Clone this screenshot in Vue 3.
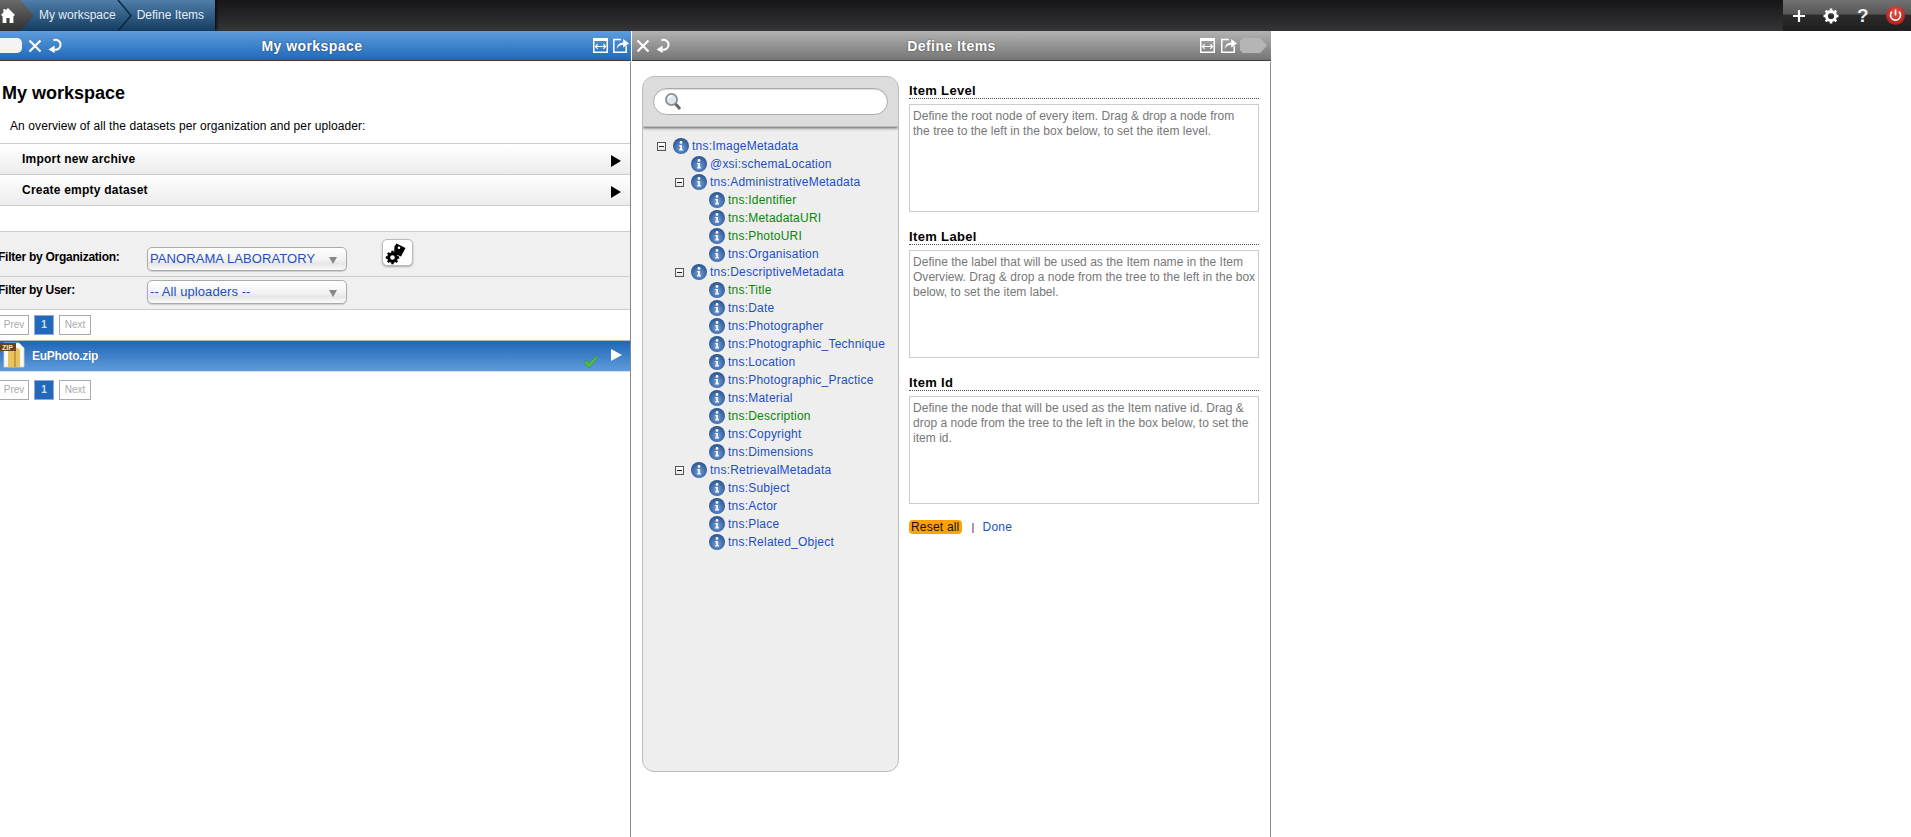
<script setup>
const tree = [
  { t: 'tns:ImageMetadata', l: 0, o: 1 },
  { t: '@xsi:schemaLocation', l: 1 },
  { t: 'tns:AdministrativeMetadata', l: 1, o: 1 },
  { t: 'tns:Identifier', l: 2, g: 1 },
  { t: 'tns:MetadataURI', l: 2, g: 1 },
  { t: 'tns:PhotoURI', l: 2, g: 1 },
  { t: 'tns:Organisation', l: 2 },
  { t: 'tns:DescriptiveMetadata', l: 1, o: 1 },
  { t: 'tns:Title', l: 2, g: 1 },
  { t: 'tns:Date', l: 2 },
  { t: 'tns:Photographer', l: 2 },
  { t: 'tns:Photographic_Technique', l: 2 },
  { t: 'tns:Location', l: 2 },
  { t: 'tns:Photographic_Practice', l: 2 },
  { t: 'tns:Material', l: 2 },
  { t: 'tns:Description', l: 2, g: 1 },
  { t: 'tns:Copyright', l: 2 },
  { t: 'tns:Dimensions', l: 2 },
  { t: 'tns:RetrievalMetadata', l: 1, o: 1 },
  { t: 'tns:Subject', l: 2 },
  { t: 'tns:Actor', l: 2 },
  { t: 'tns:Place', l: 2 },
  { t: 'tns:Related_Object', l: 2 }
]
const sections = [
  { h: 'Item Level', d: 'Define the root node of every item. Drag & drop a node from\nthe tree to the left in the box below, to set the item level.' },
  { h: 'Item Label', d: 'Define the label that will be used as the Item name in the Item\nOverview. Drag & drop a node from the tree to the left in the box\nbelow, to set the item label.' },
  { h: 'Item Id', d: 'Define the node that will be used as the Item native id. Drag &\ndrop a node from the tree to the left in the box below, to set the\nitem id.' }
]
</script>

<template>
  <div class="page">
    <svg class="defs" width="0" height="0" aria-hidden="true">
      <defs>
        <radialGradient id="infoGrad" cx="50%" cy="62%" r="62%">
          <stop offset="0" stop-color="#7aa3d6" />
          <stop offset="0.6" stop-color="#426fae" />
          <stop offset="1" stop-color="#2a548f" />
        </radialGradient>
        <symbol id="close" viewBox="0 0 14 14">
          <path d="M1.5 1.5 L12.5 12.5 M12.5 1.5 L1.5 12.5" stroke="currentColor" stroke-width="2.2" fill="none" />
        </symbol>
        <symbol id="reload" viewBox="0 0 14 16">
          <path d="M5.5 2.2 C9 0.8 12.6 3 12.6 6.8 C12.6 10.2 9.6 12 6.4 11.6" stroke="currentColor" stroke-width="2" fill="none" />
          <path d="M0.5 11.4 L6.6 7.6 L6.6 15 Z" fill="currentColor" />
        </symbol>
        <symbol id="expand" viewBox="0 0 15 15">
          <rect x="0.75" y="0.75" width="13.5" height="13.5" fill="none" stroke="currentColor" stroke-width="1.5" />
          <rect x="0" y="0" width="15" height="3" fill="currentColor" />
          <path d="M2.5 8.5 H12.5 M4.6 6.2 L2.5 8.5 L4.6 10.8 M10.4 6.2 L12.5 8.5 L10.4 10.8" fill="none" stroke="currentColor" stroke-width="1.2" />
        </symbol>
        <symbol id="export" viewBox="0 0 16 15">
          <path d="M8 1.6 H0.8 V14.2 H13.2 V8" fill="none" stroke="currentColor" stroke-width="1.5" />
          <path d="M3.6 11 C4 6.5 7 4.6 10.2 4.4 V1 L16 5.4 L10.2 9.6 V6.8 C7.6 6.8 5.2 8 3.6 11 Z" fill="currentColor" />
        </symbol>
      </defs>
    </svg>

    <header class="topbar">
      <nav class="crumbs">
        <a class="home">
          <svg width="14" height="15" viewBox="0 0 14 15">
            <path d="M7 0 L14 7 L12.4 8.2 L12.4 15 L8.6 15 L8.6 10 L5.4 10 L5.4 15 L1.6 15 L1.6 8.2 L0 7 L2.4 4.6 L2.4 1 L4.4 1 L4.4 2.6 Z" fill="#fff" />
          </svg>
        </a>
        <a class="crumb first">My workspace</a>
        <svg class="sep" width="15" height="31" viewBox="0 0 15 31">
          <path d="M1 0 L14 15.5 L1 31" fill="none" stroke="#10283f" stroke-width="1.5" />
        </svg>
        <a class="crumb">Define Items</a>
      </nav>
      <div class="tools">
        <svg class="tool" width="14" height="14" viewBox="0 0 14 14">
          <path d="M7 1 V13 M1 7 H13" stroke="#fff" stroke-width="2.2" />
        </svg>
        <svg class="tool" width="16" height="16" viewBox="0 0 16 16">
          <circle cx="8" cy="8" r="4.6" fill="none" stroke="#fff" stroke-width="3" />
          <path d="M8 0.5 V3 M8 13 V15.5 M0.5 8 H3 M13 8 H15.5 M2.7 2.7 L4.5 4.5 M11.5 11.5 L13.3 13.3 M13.3 2.7 L11.5 4.5 M4.5 11.5 L2.7 13.3" stroke="#fff" stroke-width="2.6" />
        </svg>
        <span class="help">?</span>
        <svg class="tool" width="19" height="19" viewBox="0 0 19 19">
          <defs>
            <radialGradient id="powerGrad" cx="50%" cy="35%" r="70%">
              <stop offset="0" stop-color="#e8534a" />
              <stop offset="1" stop-color="#a81a14" />
            </radialGradient>
          </defs>
          <circle cx="9.5" cy="9.5" r="9.5" fill="url(#powerGrad)" />
          <path d="M6 5.6 A5 5 0 1 0 13 5.6" fill="none" stroke="#fff" stroke-width="1.6" />
          <path d="M9.5 3.5 V9.5" stroke="#fff" stroke-width="1.6" />
        </svg>
      </div>
    </header>

    <div class="panels">
      <section class="panel left">
        <div class="phead blue">
          <div class="hleft">
            <span class="pill"></span>
            <svg class="ic x"><use href="#close" /></svg>
            <svg class="ic r"><use href="#reload" /></svg>
          </div>
          <div class="ptitle lt">My workspace</div>
          <div class="hright">
            <svg class="ic e"><use href="#expand" /></svg>
            <svg class="ic ex"><use href="#export" /></svg>
          </div>
        </div>
        <div class="pbody lbody">
          <h2 class="wtitle">My workspace</h2>
          <p class="intro">An overview of all the datasets per organization and per uploader:</p>
          <div class="action">Import new archive<i class="tri"></i></div>
          <div class="action">Create empty dataset<i class="tri"></i></div>

          <div class="filters">
            <div class="frow one">
              <label class="flabel">Filter by Organization:</label>
              <div class="sel"><span>PANORAMA LABORATORY</span><i class="caret"></i></div>
              <button class="gearbtn">
                <svg width="22" height="22" viewBox="0 0 22 22">
                  <path d="M11.5 0.5 L20.5 5 L16 13.5 L9 10.5 L9.5 3.5 Z" fill="#000" />
                  <circle cx="14" cy="4.8" r="1.3" fill="#fff" />
                  <circle cx="7.5" cy="14.5" r="3.8" fill="#fff" stroke="#000" stroke-width="3" />
                  <path d="M7.5 7.8 V10 M7.5 19 V21.2 M0.8 14.5 H3 M12 14.5 H14.2 M2.8 9.8 L4.3 11.3 M10.7 17.7 L12.2 19.2 M12.2 9.8 L10.7 11.3 M4.3 17.7 L2.8 19.2" stroke="#000" stroke-width="2.4" />
                </svg>
              </button>
            </div>
            <div class="frow two">
              <label class="flabel">Filter by User:</label>
              <div class="sel"><span>-- All uploaders --</span><i class="caret"></i></div>
            </div>
          </div>

          <div class="pager top">
            <span class="pg prev">Prev</span><span class="pg cur">1</span><span class="pg next">Next</span>
          </div>
          <div class="filerow">
            <svg class="zip" width="26" height="28" viewBox="0 0 26 28">
              <path d="M4 1 H19 L24 6 V25 H4 Z" fill="#fbfbf6" stroke="#d8d8d0" stroke-width="0.8" />
              <path d="M8 6 H18 L20 8 V25 H8 Z" fill="#eac25f" />
              <rect x="14" y="7" width="2" height="18" fill="#c99b3a" />
              <rect x="0" y="1" width="16" height="8" fill="#6b4216" />
              <text x="2" y="8" class="ziptext">ZIP</text>
            </svg>
            <span class="fname">EuPhoto.zip</span>
            <svg class="check" width="16" height="14" viewBox="0 0 16 14">
              <path d="M1 7.5 L3.6 5.5 L6 8.5 L13.5 1 L15 2.2 L6.2 13 Z" fill="#58c03e" stroke="#2d8a22" stroke-width="0.6" />
            </svg>
            <i class="tri white"></i>
          </div>
          <div class="pager bottom">
            <span class="pg prev">Prev</span><span class="pg cur">1</span><span class="pg next">Next</span>
          </div>
        </div>
      </section>

      <section class="panel right">
        <div class="phead gray">
          <div class="hleft">
            <svg class="ic x"><use href="#close" /></svg>
            <svg class="ic r"><use href="#reload" /></svg>
          </div>
          <div class="ptitle">Define Items</div>
          <div class="hright">
            <svg class="ic e"><use href="#expand" /></svg>
            <svg class="ic ex"><use href="#export" /></svg>
            <span class="tag"></span>
          </div>
        </div>
        <div class="pbody rbody">
          <aside class="treebox">
            <div class="searchwrap">
              <div class="search">
                <svg width="18" height="19" viewBox="0 0 18 19">
                  <circle cx="7.5" cy="7.5" r="5.6" fill="#dfe6ee" stroke="#8a8f96" stroke-width="1.8" />
                  <path d="M4.5 6.5 A3.4 3.4 0 0 1 8 4" fill="none" stroke="#fff" stroke-width="1.4" />
                  <path d="M11.6 12 L16 17" stroke="#666" stroke-width="3" />
                </svg>
              </div>
            </div>
            <ul class="tree">
              <li v-for="n in tree" :key="n.t" class="node" :style="{ paddingLeft: 9 + n.l * 18 + 'px' }">
                <span class="slot"><i v-if="n.o" class="minus"></i></span>
                <svg class="info" width="16" height="16" viewBox="0 0 16 16">
                  <circle cx="8" cy="8" r="8" fill="url(#infoGrad)" />
                  <circle cx="8" cy="4.4" r="1.4" fill="#fff" />
                  <path d="M6.2 7 H8.9 V11.2 H10 V12.4 H6 V11.2 H7.2 V8.2 H6.2 Z" fill="#fff" />
                </svg>
                <span :class="['lbl', { green: n.g }]">{{ n.t }}</span>
              </li>
            </ul>
          </aside>
          <div class="form">
            <div v-for="s in sections" :key="s.h" class="sec">
              <h3 class="sech">{{ s.h }}</h3>
              <div class="drop">{{ s.d }}</div>
            </div>
            <div class="links">
              <a class="reset">Reset all</a>
              <span class="bar">|</span>
              <a class="done">Done</a>
            </div>
          </div>
        </div>
      </section>
    </div>
  </div>
</template>

<style>
html, body { margin: 0; background: #fff; overflow: hidden; }
</style>

<style scoped>
.page {
  width: 1911px;
  height: 837px;
  overflow: hidden;
  font-family: "Liberation Sans", Arial, sans-serif;
  font-size: 12px;
  color: #000;
  background: #fff;
}
.defs { position: absolute; }

.topbar {
  height: 31px;
  display: flex;
  justify-content: space-between;
  background: linear-gradient(#161618, #353537);
}
.crumbs {
  display: flex;
  align-items: center;
  width: 215px;
  height: 31px;
  background: linear-gradient(#4f7ea8, #143c62);
  box-shadow: 1px 0 3px #000;
  color: #e4edf5;
}
.home {
  width: 34px;
  height: 31px;
  flex: none;
  box-sizing: border-box;
  padding: 8px 0 0 1px;
  background: linear-gradient(#6a6a6a, #2f2f2f);
  clip-path: polygon(0 0, 20px 0, 100% 50%, 20px 100%, 0 100%);
}
.home svg { display: block; }
.crumb { white-space: nowrap; line-height: 31px; }
.first { margin-left: 5px; }
.sep { flex: none; margin: 0 5px 0 1px; }

.tools {
  width: 128px;
  box-sizing: border-box;
  display: flex;
  align-items: center;
  padding: 0 6px 0 9px;
  justify-content: space-between;
  background: linear-gradient(#727272, #565656 46%, #2c2c2c 48%, #1e1e1e);
}
.tool { flex: none; display: block; }
.help {
  color: #eee;
  font: bold 19px "Liberation Sans", sans-serif;
  line-height: 20px;
}

.panels { display: flex; height: 806px; }
.panel { flex: none; display: flex; flex-direction: column; }
.left { width: 632px; }
.right { width: 639px; }

.phead {
  height: 29px;
  flex: none;
  display: grid;
  grid-template-columns: 1fr auto 1fr;
  align-items: center;
  border-bottom: 1px solid #3a3a3a;
  color: #fff;
}
.left .phead { margin-right: 1px; }
.blue { background: linear-gradient(#5e9cdc, #2069b9); }
.gray { background: linear-gradient(#b2b2b2, #757575); }
.ptitle {
  font-size: 14px;
  font-weight: bold;
  letter-spacing: 0.45px;
  text-shadow: 0 0 2px rgba(0, 0, 0, 0.55);
}
.lt { margin-left: -7px; }
.hleft, .hright { display: flex; align-items: center; }
.hright { justify-content: flex-end; }
.ic { display: block; color: #fff; flex: none; }
.ic.x { width: 14px; height: 14px; }
.ic.r { width: 14px; height: 16px; }
.ic.e { width: 15px; height: 15px; }
.ic.ex { width: 16px; height: 15px; margin-left: 5px; }
.pill {
  width: 22px;
  height: 15px;
  background: #f4f4f4;
  border-radius: 0 5px 5px 0;
  margin-right: 6px;
}
.left .ic.x { margin-right: 6px; }
.left .hright { padding-right: 2px; }
.right .hleft { padding-left: 4px; }
.right .ic.x { margin-right: 6px; }
.right .ic.ex { margin-left: 6px; }
.tag {
  width: 27px;
  height: 15px;
  margin: 0 4px 0 3px;
  background: #b5b5b5;
  clip-path: polygon(0 20%, 10% 0, 75% 0, 100% 50%, 75% 100%, 10% 100%, 0 80%);
}

.pbody { flex: 1; margin-top: 1px; position: relative; }
.lbody { border-right: 1px solid #888; width: 630px; }
.wtitle {
  margin: 0;
  padding: 20px 0 0 2px;
  font-size: 18px;
  line-height: 22px;
  font-weight: bold;
}
.intro {
  margin: 15px 0 9px 10px;
  line-height: 15px;
  letter-spacing: 0.09px;
}
.action {
  height: 30px;
  border-top: 1px solid #ccc;
  background: linear-gradient(#fff, #ececec);
  padding-left: 22px;
  line-height: 30px;
  font-weight: bold;
  letter-spacing: 0.22px;
  position: relative;
}
.action + .action { border-bottom: 1px solid #ccc; }
.tri {
  position: absolute;
  right: 9px;
  top: 11px;
  width: 0;
  height: 0;
  border-left: 10px solid #000;
  border-top: 6px solid transparent;
  border-bottom: 6px solid transparent;
}
.tri.white { border-left-color: #fff; border-left-width: 11px; top: 8px; right: 8px; }

.filters {
  margin-top: 25px;
  background: #f0f0f0;
  border-top: 1px solid #ccc;
  border-bottom: 1px solid #ccc;
}
.frow { display: flex; box-sizing: border-box; }
.one { height: 45px; padding-top: 15px; border-bottom: 1px solid #ccc; }
.two { height: 32px; padding-top: 3px; }
.flabel {
  width: 149px;
  margin-left: -2px;
  flex: none;
  font-weight: bold;
  line-height: 20px;
  letter-spacing: -0.25px;
}
.sel {
  width: 200px;
  height: 24px;
  box-sizing: border-box;
  flex: none;
  border: 1px solid #aaa;
  border-radius: 5px;
  background: linear-gradient(#fff, #f2f2f2 55%, #e6e6e6 70%, #fafafa);
  box-shadow: 0 1px 1px #ccc;
  color: #1c4fc4;
  font-size: 13px;
  line-height: 22px;
  letter-spacing: 0.08px;
  padding-left: 2px;
  position: relative;
  white-space: nowrap;
}
.caret {
  position: absolute;
  right: 9px;
  top: 9px;
  border-top: 7px solid #888;
  border-left: 4px solid transparent;
  border-right: 4px solid transparent;
}
.gearbtn {
  width: 31px;
  height: 27px;
  margin: -8px 0 0 35px;
  padding: 2px 0 0 2px;
  flex: none;
  box-sizing: border-box;
  background: #fff;
  border: 1px solid #bbb;
  border-radius: 5px;
  box-shadow: 0 1px 2px #aaa;
  display: block;
  line-height: 0;
  text-align: left;
}

.pager { display: flex; margin-left: -1px; font-size: 10px; }
.pager.top { padding-top: 5px; height: 30px; box-sizing: border-box; }
.pager.bottom { padding-top: 8px; }
.pg {
  height: 20px;
  box-sizing: border-box;
  border: 1px solid #aaa;
  line-height: 18px;
  text-align: center;
  color: #aaa;
}
.prev { width: 30px; }
.next { width: 32px; margin-left: 5px; }
.cur {
  width: 20px;
  margin-left: 5px;
  background: #2169bb;
  border-color: #8fa8d8;
  color: #cfe0f4;
  font-weight: bold;
}

.filerow {
  height: 32px;
  box-sizing: border-box;
  border-top: 1px solid #bbb;
  border-bottom: 1px solid #cfe0f0;
  background: linear-gradient(#1f66b6, #5f9cdc);
  position: relative;
  display: flex;
  align-items: center;
  color: #fff;
}
.zip { flex: none; }
.ziptext { font: bold 7px "Liberation Sans", sans-serif; fill: #f3e6cc; }
.fname {
  font-weight: bold;
  margin-left: 6px;
  padding-bottom: 1px;
  letter-spacing: -0.3px;
  text-shadow: 0 0 1px rgba(0, 0, 0, 0.4);
}
.check { position: absolute; left: 583px; top: 14px; }

.rbody { display: flex; padding: 14px 0 0 10px; border-right: 1px solid #888; width: 628px; }
.treebox {
  width: 257px;
  height: 696px;
  flex: none;
  box-sizing: border-box;
  border: 1px solid #bcbcbc;
  border-radius: 12px;
  background: #eee;
  overflow: hidden;
}
.searchwrap {
  height: 50px;
  box-sizing: border-box;
  padding: 11px 0 0 10px;
  background: #dcdcdc;
  box-shadow: 0 1px 3px #555;
  border-bottom: 1px solid #bbb;
  position: relative;
}
.search {
  width: 235px;
  height: 27px;
  box-sizing: border-box;
  background: #fff;
  border: 1px solid #aaa;
  border-radius: 14px;
  padding: 3px 0 0 10px;
  box-shadow: inset 0 1px 1px #ddd;
}
.search svg { display: block; }
.tree { list-style: none; margin: 0; padding: 10px 0 0; }
.node { height: 18px; display: flex; align-items: center; }
.slot { width: 21px; flex: none; position: relative; height: 18px; }
.minus {
  position: absolute;
  left: 5px;
  top: 5px;
  width: 9px;
  height: 9px;
  box-sizing: border-box;
  border: 1px solid #555;
  background: linear-gradient(#fff, #e4e4e4);
}
.minus::after {
  content: "";
  position: absolute;
  left: 1px;
  right: 1px;
  top: 3px;
  height: 1px;
  background: #222;
}
.info { flex: none; }
.lbl { margin-left: 3px; color: #1c4fc4; white-space: nowrap; letter-spacing: 0.22px; }
.lbl.green { color: #0b850b; }

.form { width: 350px; margin-left: 10px; padding-top: 6px; }
.sec { margin-bottom: 16px; }
.sech {
  margin: 0 0 5px;
  height: 17px;
  box-sizing: border-box;
  border-bottom: 1px dotted #555;
  padding-top: 1px;
  font-size: 13px;
  line-height: 16px;
  letter-spacing: 0.35px;
  font-weight: bold;
}
.drop {
  height: 108px;
  box-sizing: border-box;
  border: 1px solid #ccc;
  padding: 4px 0 4px 3px;
  color: #777;
  line-height: 15px;
  letter-spacing: 0.03px;
  white-space: pre;
}
.links { display: flex; align-items: center; height: 14px; letter-spacing: 0.2px; }
.reset {
  background: #ffa200;
  border-radius: 4px;
  padding: 0 2px;
  line-height: 14px;
  color: #111;
}
.bar { color: #5b0f55; margin: 0 8px 0 10px; font-size: 11px; }
.done { color: #1c4fc4; }
</style>
